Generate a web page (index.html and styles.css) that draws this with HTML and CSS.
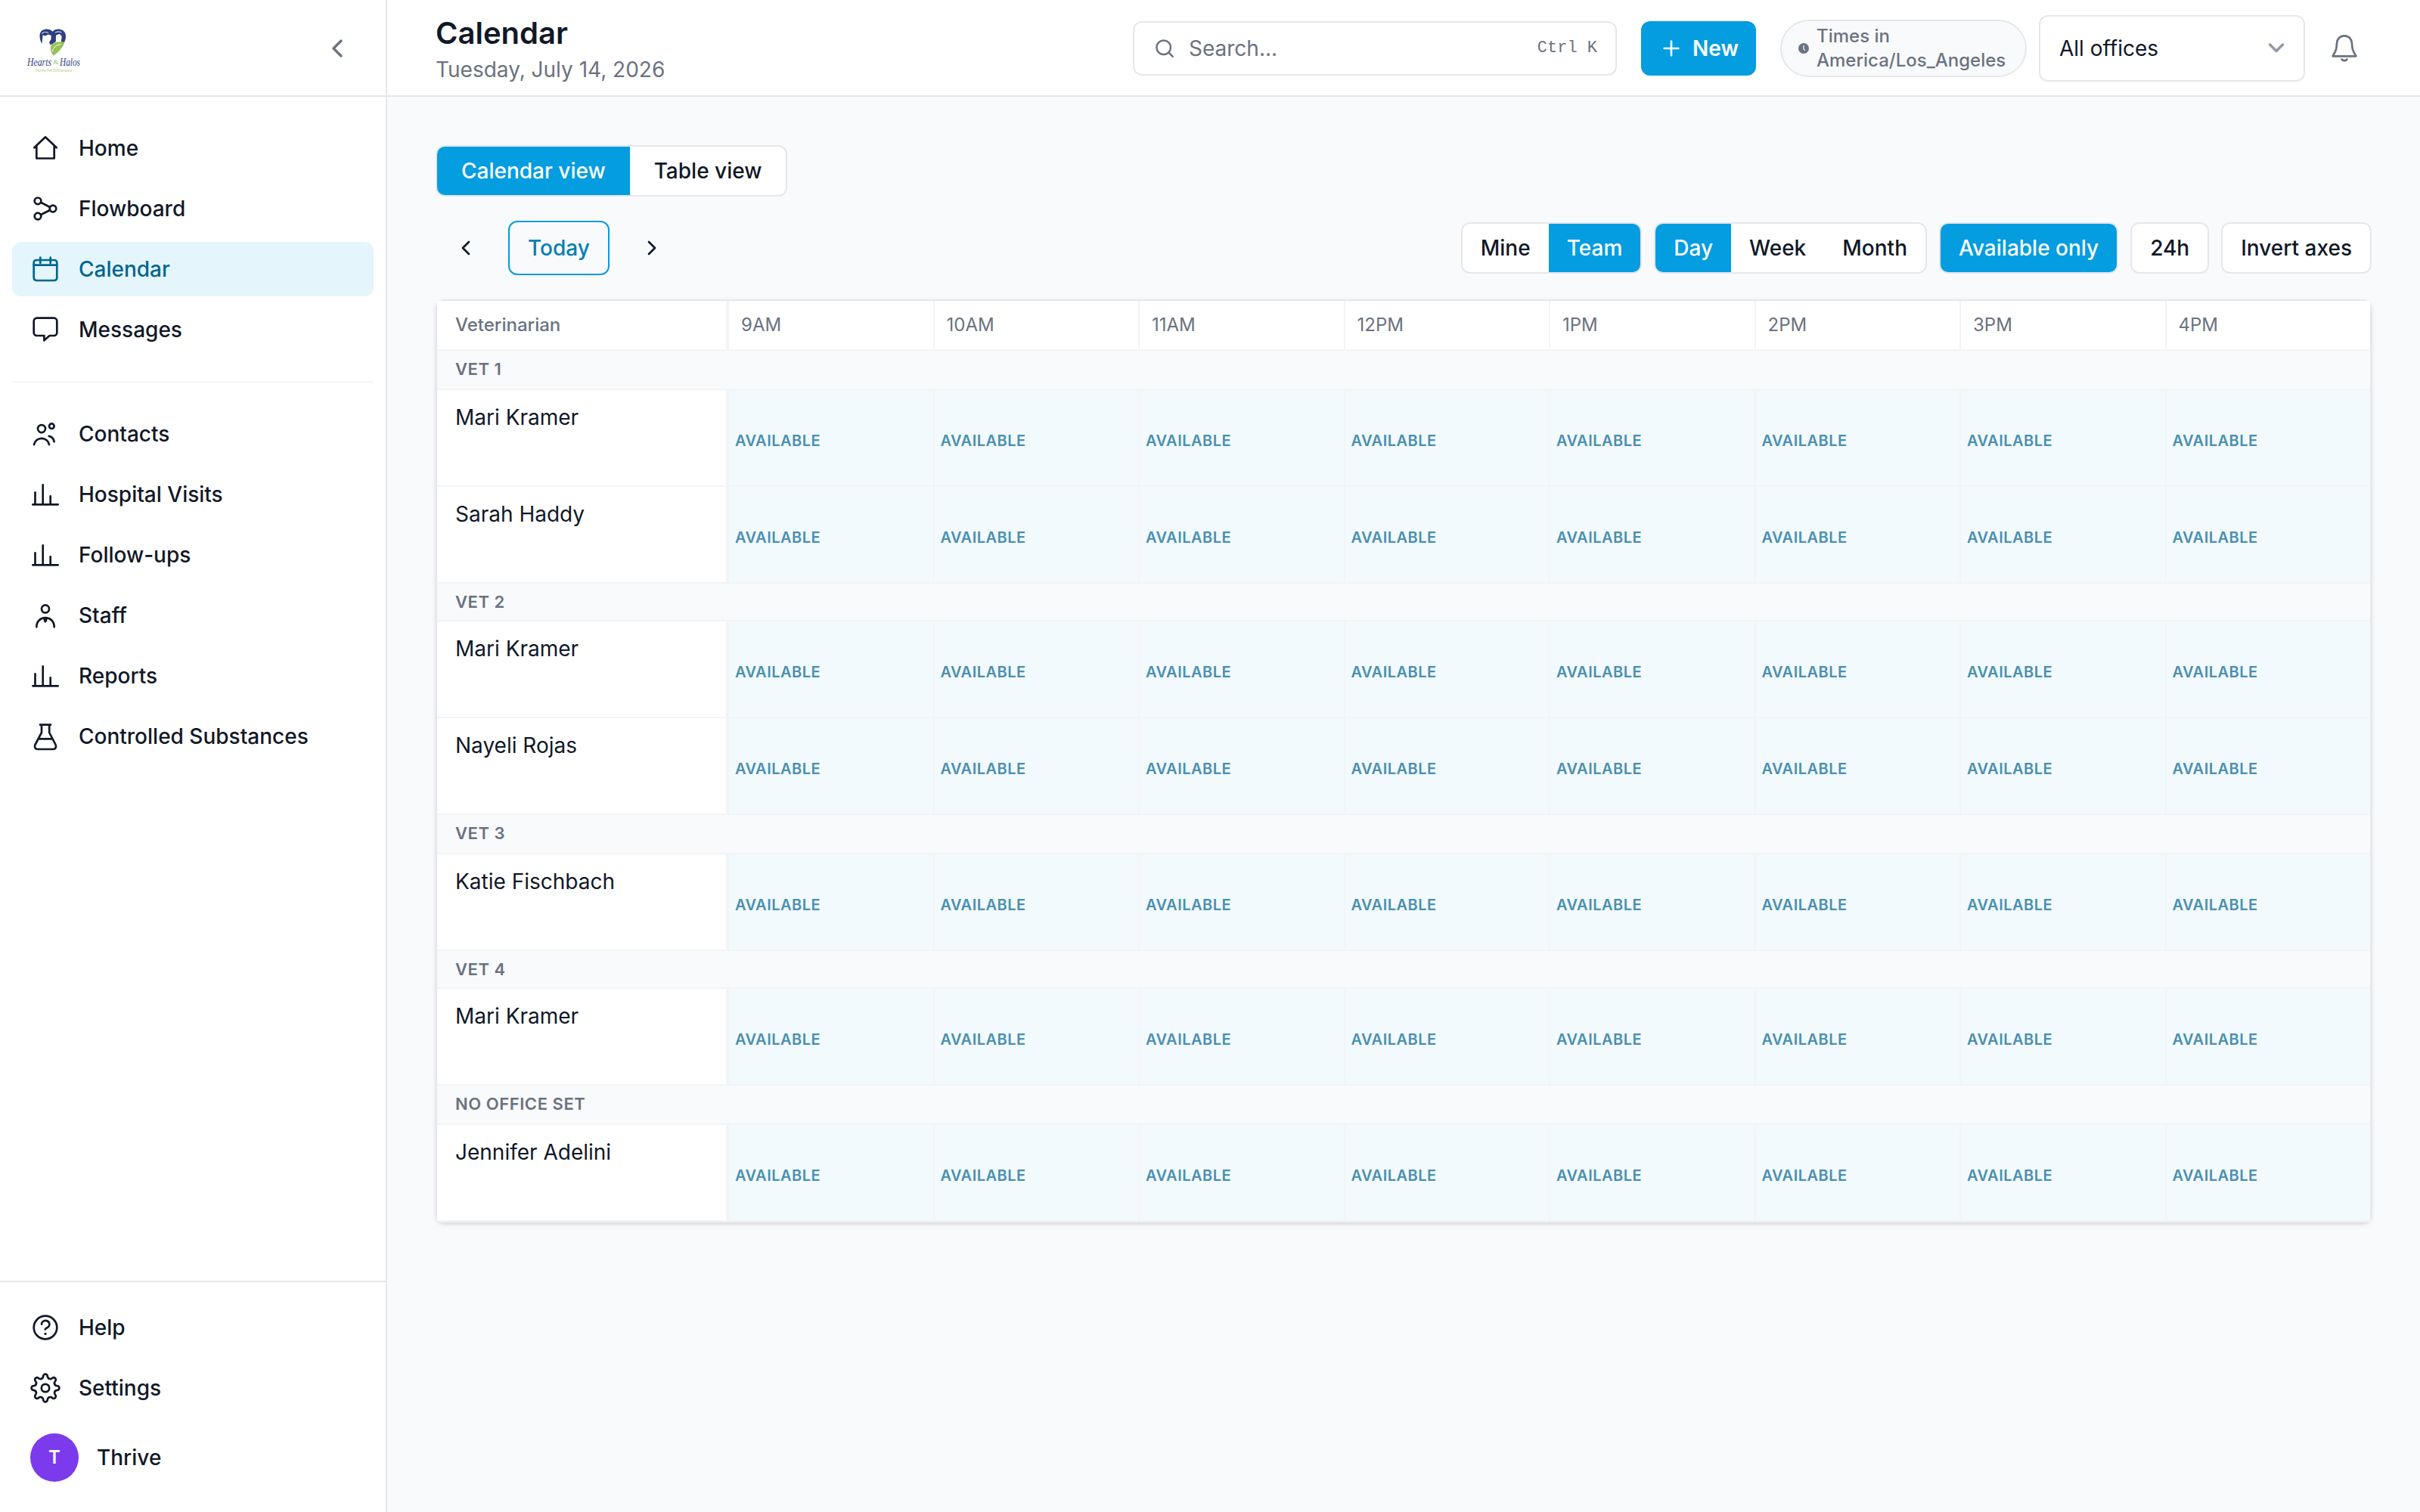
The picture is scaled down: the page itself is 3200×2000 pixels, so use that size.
FILE: index.html
```html
<!DOCTYPE html>
<html lang="en">
<head>
    <meta charset="UTF-8">
    <meta name="viewport" content="width=device-width, initial-scale=1.0">
    <title>Calendar</title>
    <link rel="stylesheet" href="styles.css">
</head>
<body>
    <!-- Shared icon shapes -->
    <svg class="sprite" aria-hidden="true">
        <symbol id="icon-bars" viewBox="0 0 40 40">
            <path d="M3.3 33.3h33.4M6.5 33.3V17.3M16.7 33.3V7.3M26.7 33.3V22.3"/>
        </symbol>
        <symbol id="icon-left" viewBox="0 0 24 24"><path d="m15 18-6-6 6-6"/></symbol>
        <symbol id="icon-right" viewBox="0 0 24 24"><path d="m9 18 6-6-6-6"/></symbol>
        <path id="tooth" d="M-5.09-12.29C-3.6-12.9-2.9-13.9-2.8-15.6A2.8 2.8 0 0 1 2.8-15.6C2.9-13.9 3.6-12.9 5.09-12.29"/>
    </svg>

    <div class="app">
        <aside class="sidebar">
            <div class="brand">
                <svg class="logo" viewBox="0 0 72 60">
                    <path class="logo-blue" d="M20.5 24C15.500 15 16.500 5.500 25 4.700c4-.5 7 .8 9.500 3 2.500-2.200 5.500-3.500 9.500-3 8 1 10 9 6 17.300l-4.300.2 1-8.500-3.200-3-4.500 2-.2 8.500-7 4.300-1.800-3.200 2.500-4.300.2-5-4-1.500-3.500 2-3.700-1-.5 6z"/>
                    <path class="logo-line" d="M20 10.500c3-2.500 6-2.500 9-1M38 9c3-1.500 6-1.500 8.500 0M24 15c3 2 2.500 5 1.500 7"/>
                    <path class="logo-green" d="M50.500 21.500c-2 7-7 12.500-14.800 18.200-3.700-4.500-4.500-9.700-3-14 4.300-4.700 10.800-4.700 17.800-4.200z"/>
                    <path class="logo-line" d="M34.500 34c.5-5 4-8.500 11-9.500"/>
                    <text class="logo-name" x="1" y="53" textLength="32" lengthAdjust="spacingAndGlyphs">Hearts</text>
                    <text class="logo-amp" x="35.500" y="51">&amp;</text>
                    <text class="logo-name" x="44" y="53" textLength="27" lengthAdjust="spacingAndGlyphs">Halos</text>
                    <text class="logo-tag" x="12" y="61" textLength="48" lengthAdjust="spacingAndGlyphs">Home Pet Euthanasia</text>
                </svg>
                <svg class="icon collapse"><use href="#icon-left"/></svg>
            </div>

            <nav class="nav">
                <a class="nav-item">
                    <svg class="icon" viewBox="0 0 40 40"><path d="M5.300 19.300 20 5.300l14.700 14M8.300 17v16.500h23.400V17"/></svg>
                    Home
                </a>
                <a class="nav-item">
                    <svg class="icon" viewBox="0 0 40 40"><circle cx="10" cy="9.800" r="4.300"/><circle cx="10" cy="30" r="4.300"/><circle cx="30" cy="20" r="4.300"/><path d="m14 11.800 12 6.200M14 28l12-6"/></svg>
                    Flowboard
                </a>
                <a class="nav-item active">
                    <svg class="icon" viewBox="0 0 40 40"><rect x="4.700" y="8" width="30.600" height="27" rx="3.500"/><path d="M4.700 14.700h30.600M13.300 4.700V12M26.700 4.700V12"/></svg>
                    Calendar
                </a>
                <a class="nav-item">
                    <svg class="icon" viewBox="0 0 40 40"><path d="M8.700 4.700h22.600a4 4 0 0 1 4 4V24a4 4 0 0 1-4 4H25.500l-7.100 6.300V28H8.700a4 4 0 0 1-4-4V8.700a4 4 0 0 1 4-4z"/></svg>
                    Messages
                </a>
                <hr class="nav-divider">
                <a class="nav-item">
                    <svg class="icon" viewBox="0 0 40 40"><circle cx="15" cy="13.100" r="5"/><circle cx="28.300" cy="9.700" r="3.300"/><path d="M5 34.100a10.100 9.500 0 0 1 20 0M24.700 22.800q5.500.8 7 7.500"/></svg>
                    Contacts
                </a>
                <a class="nav-item">
                    <svg class="icon"><use href="#icon-bars"/></svg>
                    Hospital Visits
                </a>
                <a class="nav-item">
                    <svg class="icon"><use href="#icon-bars"/></svg>
                    Follow-ups
                </a>
                <a class="nav-item">
                    <svg class="icon" viewBox="0 0 40 40"><circle cx="20" cy="11.400" r="5"/><path d="M8.300 35.300c0-7.500 5.200-12.100 11.700-12.100s11.700 4.600 11.700 12.100"/><path class="solid" d="M18 24h4l-.5 3-1.500 2-1.500-2z"/></svg>
                    Staff
                </a>
                <a class="nav-item">
                    <svg class="icon"><use href="#icon-bars"/></svg>
                    Reports
                </a>
                <a class="nav-item">
                    <svg class="icon" viewBox="0 0 40 40"><path d="M13 4.700h14M15 4.700v10.300L6.500 31c-1.500 3 0 6 3 6h21c3 0 4.500-3 3-6l-8.300-16V4.700M10.800 23.300h18.500"/></svg>
                    Controlled Substances
                </a>
            </nav>

            <div class="nav-bottom">
                <a class="nav-item">
                    <svg class="icon" viewBox="0 0 40 40"><circle cx="20" cy="20" r="15.300"/><path d="M15 15.600a5.200 4.900 0 1 1 7.300 4.600q-2.400 1-2.500 2.300"/><circle class="dot" cx="20" cy="28.300" r="1.600"/></svg>
                    Help
                </a>
                <a class="nav-item">
                    <svg class="icon" viewBox="-20 -20 40 40">
                        <circle r="5.200"/>
                        <use href="#tooth"/>
                        <use href="#tooth" transform="rotate(45)"/>
                        <use href="#tooth" transform="rotate(90)"/>
                        <use href="#tooth" transform="rotate(135)"/>
                        <use href="#tooth" transform="rotate(180)"/>
                        <use href="#tooth" transform="rotate(225)"/>
                        <use href="#tooth" transform="rotate(270)"/>
                        <use href="#tooth" transform="rotate(315)"/>
                    </svg>
                    Settings
                </a>
                <a class="nav-item profile">
                    <span class="avatar">T</span>
                    Thrive
                </a>
            </div>
        </aside>

        <div class="main">
            <header class="topbar">
                <div class="title">
                    <h1>Calendar</h1>
                    <p>Tuesday, July 14, 2026</p>
                </div>
                <div class="search">
                    <svg class="icon search-icon" viewBox="0 0 32 32"><circle cx="14.700" cy="14.700" r="9.300"/><path d="m21.500 21.500 5.300 5.300"/></svg>
                    <span>Search...</span>
                    <kbd>Ctrl K</kbd>
                </div>
                <button class="btn-new">
                    <svg class="icon" viewBox="0 0 24 24"><path d="M5 12h14M12 5v14"/></svg>
                    New
                </button>
                <div class="timezone">
                    <svg class="clock" viewBox="0 0 14 14"><circle cx="7" cy="7" r="7"/><path d="M7 3v4.500l1.800 2.500"/></svg>
                    <span>Times in America/Los_Angeles</span>
                </div>
                <div class="select">
                    All offices
                    <svg class="icon" viewBox="0 0 24 16"><path d="m3.500 3 8.500 8.500L20.500 3"/></svg>
                </div>
                <div class="bell">
                    <svg class="icon" viewBox="0 0 40 40"><path d="M20 3.300c6 0 9.800 4.500 10 10.200.2 6 1 9.500 3 12.500q1.600 2.600 2.300 4.300H4.700q.7-1.700 2.300-4.300c2-3 2.800-6.500 3-12.500.2-5.700 4-10.200 10-10.200z"/><path d="M16.500 34.500q3.500 3.500 7 0"/></svg>
                </div>
            </header>

            <main class="content">
                <div class="segmented views">
                    <button class="on">Calendar view</button>
                    <button>Table view</button>
                </div>

                <div class="toolbar">
                    <button class="arrow"><svg class="icon"><use href="#icon-left"/></svg></button>
                    <button class="today">Today</button>
                    <button class="arrow"><svg class="icon"><use href="#icon-right"/></svg></button>
                    <div class="filters">
                        <div class="segmented">
                            <button>Mine</button>
                            <button class="on">Team</button>
                        </div>
                        <div class="segmented">
                            <button class="on">Day</button>
                            <button>Week</button>
                            <button>Month</button>
                        </div>
                        <div class="segmented">
                            <button class="on">Available only</button>
                        </div>
                        <div class="segmented">
                            <button>24h</button>
                        </div>
                        <div class="segmented">
                            <button>Invert axes</button>
                        </div>
                    </div>
                </div>

                <div class="schedule">
                    <div class="row head">
                        <div class="label">Veterinarian</div>
                        <div>9AM</div><div>10AM</div><div>11AM</div><div>12PM</div>
                        <div>1PM</div><div>2PM</div><div>3PM</div><div>4PM</div>
                    </div>

                    <div class="office">Vet 1</div>
                    <div class="row">
                        <div class="label">Mari Kramer</div>
                        <div class="slot">Available</div><div class="slot">Available</div><div class="slot">Available</div><div class="slot">Available</div>
                        <div class="slot">Available</div><div class="slot">Available</div><div class="slot">Available</div><div class="slot">Available</div>
                    </div>
                    <div class="row">
                        <div class="label">Sarah Haddy</div>
                        <div class="slot">Available</div><div class="slot">Available</div><div class="slot">Available</div><div class="slot">Available</div>
                        <div class="slot">Available</div><div class="slot">Available</div><div class="slot">Available</div><div class="slot">Available</div>
                    </div>

                    <div class="office short">Vet 2</div>
                    <div class="row">
                        <div class="label">Mari Kramer</div>
                        <div class="slot">Available</div><div class="slot">Available</div><div class="slot">Available</div><div class="slot">Available</div>
                        <div class="slot">Available</div><div class="slot">Available</div><div class="slot">Available</div><div class="slot">Available</div>
                    </div>
                    <div class="row">
                        <div class="label">Nayeli Rojas</div>
                        <div class="slot">Available</div><div class="slot">Available</div><div class="slot">Available</div><div class="slot">Available</div>
                        <div class="slot">Available</div><div class="slot">Available</div><div class="slot">Available</div><div class="slot">Available</div>
                    </div>

                    <div class="office">Vet 3</div>
                    <div class="row">
                        <div class="label">Katie Fischbach</div>
                        <div class="slot">Available</div><div class="slot">Available</div><div class="slot">Available</div><div class="slot">Available</div>
                        <div class="slot">Available</div><div class="slot">Available</div><div class="slot">Available</div><div class="slot">Available</div>
                    </div>

                    <div class="office short">Vet 4</div>
                    <div class="row">
                        <div class="label">Mari Kramer</div>
                        <div class="slot">Available</div><div class="slot">Available</div><div class="slot">Available</div><div class="slot">Available</div>
                        <div class="slot">Available</div><div class="slot">Available</div><div class="slot">Available</div><div class="slot">Available</div>
                    </div>

                    <div class="office">No office set</div>
                    <div class="row">
                        <div class="label">Jennifer Adelini</div>
                        <div class="slot">Available</div><div class="slot">Available</div><div class="slot">Available</div><div class="slot">Available</div>
                        <div class="slot">Available</div><div class="slot">Available</div><div class="slot">Available</div><div class="slot">Available</div>
                    </div>
                </div>
            </main>
        </div>
    </div>
</body>
</html>
```

FILE: styles.css
```css
* {
    box-sizing: border-box;
}

body {
    margin: 0;
    font-family: Inter, "Liberation Sans", sans-serif;
    font-size: 28px;
    line-height: 40px;
    color: #111827;
    background: #f9fafc;
}

button {
    font: inherit;
    color: inherit;
    background: none;
    border: none;
    padding: 0;
    cursor: pointer;
}

.sprite {
    display: none;
}

.icon {
    width: 40px;
    height: 40px;
    flex-shrink: 0;
    fill: none;
    stroke: currentColor;
    stroke-width: 2.7;
    stroke-linecap: round;
    stroke-linejoin: round;
}

.icon .solid {
    fill: currentColor;
    stroke-width: 1.5;
}

.icon .dot {
    fill: currentColor;
    stroke: none;
}

.app {
    display: flex;
    height: 2000px;
}

/* Sidebar */
.sidebar {
    width: 512px;
    flex-shrink: 0;
    display: flex;
    flex-direction: column;
    background: #ffffff;
    border-right: 2px solid #e5e7eb;
}

.brand {
    height: 128px;
    display: flex;
    align-items: center;
    justify-content: space-between;
    padding: 2px 44px 0 35px;
    border-bottom: 2px solid #e5e7eb;
}

.logo {
    width: 72px;
    height: 60px;
    overflow: visible;
}

.logo-blue {
    fill: #2d3f7f;
}

.logo-green {
    fill: #96c159;
}

.logo-line {
    fill: none;
    stroke: #ffffff;
    stroke-width: 1;
}

.logo-name {
    font: italic 15px "Liberation Serif", serif;
    fill: #2d3f7f;
}

.logo-amp {
    font: 9px "Liberation Serif", serif;
    fill: #96c159;
}

.logo-tag {
    font: 6px "Open Sans", sans-serif;
    fill: #a9cc78;
}

.collapse {
    color: #6b7280;
    stroke-width: 2;
}

.nav {
    flex: 1;
    display: flex;
    flex-direction: column;
    gap: 8px;
    padding: 32px 16px;
}

.nav-item {
    height: 72px;
    display: flex;
    align-items: center;
    gap: 24px;
    padding: 0 24px;
    border-radius: 12px;
    font-weight: 500;
}

.nav-item.active {
    background: #e5f5fc;
    color: #006590;
}

.nav-divider {
    width: 100%;
    height: 2px;
    margin: 24px 0;
    border: none;
    background: #f3f4f6;
}

.nav-bottom {
    display: flex;
    flex-direction: column;
    gap: 8px;
    padding: 24px 16px;
    border-top: 2px solid #e5e7eb;
}

.profile {
    height: 96px;
}

.avatar {
    width: 64px;
    height: 64px;
    display: flex;
    align-items: center;
    justify-content: center;
    border-radius: 50%;
    background: #7c3aed;
    color: #ffffff;
    font-size: 24px;
    font-weight: 600;
}

/* Top bar */
.main {
    flex: 1;
    min-width: 0;
}

.topbar {
    height: 128px;
    display: flex;
    align-items: center;
    padding: 2px 64px 0;
    background: #ffffff;
    border-bottom: 2px solid #e5e7eb;
}

.title {
    flex: 1;
}

.title h1 {
    margin: 0;
    font-size: 40px;
    font-weight: 600;
    line-height: 56px;
}

.title p {
    margin: 0;
    color: #6b7280;
}

.search {
    width: 640px;
    height: 72px;
    display: flex;
    align-items: center;
    gap: 16px;
    margin-right: 32px;
    padding: 0 24px;
    border: 2px solid #e5e7eb;
    border-radius: 12px;
    color: #6b7280;
}

.search-icon {
    width: 32px;
    height: 32px;
    stroke-width: 2.5;
}

.search kbd {
    margin-left: auto;
    font-family: "Liberation Mono", monospace;
    font-size: 22px;
}

.btn-new {
    width: 152px;
    height: 72px;
    display: flex;
    align-items: center;
    gap: 12px;
    margin-right: 32px;
    padding-left: 24px;
    border-radius: 12px;
    background: #039de0;
    color: #ffffff;
    font-weight: 600;
}

.btn-new .icon {
    width: 32px;
    height: 32px;
    stroke-width: 2;
}

.timezone {
    width: 326px;
    display: flex;
    align-items: center;
    gap: 10px;
    margin-right: 16px;
    padding: 4px 20px 4px 22px;
    border: 2px solid #e5e7eb;
    border-radius: 38px;
    background: #f9fafc;
    color: #6b7280;
    font-size: 24px;
    font-weight: 500;
    line-height: 32px;
}

.clock {
    width: 14px;
    height: 14px;
    flex-shrink: 0;
    fill: currentColor;
}

.clock path {
    fill: none;
    stroke: #f9fafc;
    stroke-width: 1.2;
}

.select {
    width: 352px;
    height: 88px;
    display: flex;
    align-items: center;
    justify-content: space-between;
    margin-right: 16px;
    padding: 0 24px 0 25px;
    border: 2px solid #e5e7eb;
    border-radius: 12px;
}

.select .icon {
    width: 24px;
    height: 16px;
    color: #8f97a4;
    stroke-width: 3.4;
}

.bell {
    width: 72px;
    display: flex;
    justify-content: center;
    color: #6b7280;
}

/* Content */
.content {
    padding: 64px;
}

.segmented {
    display: flex;
    border: 2px solid #e5e7eb;
    border-radius: 12px;
    background: #ffffff;
    overflow: hidden;
    font-weight: 500;
}

.segmented button {
    height: 64px;
    padding: 0 24px;
}

.segmented .on {
    background: #039de0;
    color: #ffffff;
}

.views {
    width: fit-content;
}

.views button {
    padding: 0 32px;
}

.toolbar {
    height: 72px;
    display: flex;
    align-items: center;
    margin: 32px 0;
}

.arrow {
    width: 80px;
    display: flex;
    justify-content: center;
}

.arrow .icon {
    width: 32px;
    height: 32px;
    stroke-width: 2;
}

.today {
    height: 72px;
    margin: 0 16px;
    padding: 0 24px;
    border: 2px solid #039de0;
    border-radius: 12px;
    color: #0080b5;
    font-weight: 500;
}

.filters {
    display: flex;
    gap: 16px;
    margin-left: auto;
}

.schedule {
    border: 2px solid #e5e7eb;
    border-radius: 12px;
    box-shadow: 0 2px 6px rgba(0, 0, 0, 0.1), 0 2px 4px -2px rgba(0, 0, 0, 0.1);
}

.row {
    display: grid;
    grid-template-columns: 384px repeat(8, 1fr);
    height: 128px;
    background: #ffffff;
    border-bottom: 2px solid #f3f4f6;
}

.row > div {
    border-left: 2px solid #f3f4f6;
}

.row > .label {
    padding: 16px 24px;
    border-left: none;
    border-right: 2px solid #f3f4f6;
}

.head {
    height: 66px;
    color: #6b7280;
    font-size: 24px;
    line-height: 32px;
}

.head > div {
    padding: 16px;
}

.head > .label {
    font-weight: 500;
}

.office {
    height: 52px;
    padding: 12px 24px;
    border-bottom: 2px solid #f3f4f6;
    background: #f9fafc;
    color: #6b7280;
    font-size: 22px;
    font-weight: 600;
    line-height: 24px;
    letter-spacing: 0.025em;
    text-transform: uppercase;
}

.office.short {
    height: 50px;
}

.slot {
    display: flex;
    align-items: center;
    padding: 8px 8px 0;
    background: #f2fafd;
    color: #4a8fb0;
    font-size: 20px;
    font-weight: 600;
    letter-spacing: 0.025em;
    text-transform: uppercase;
}
```
